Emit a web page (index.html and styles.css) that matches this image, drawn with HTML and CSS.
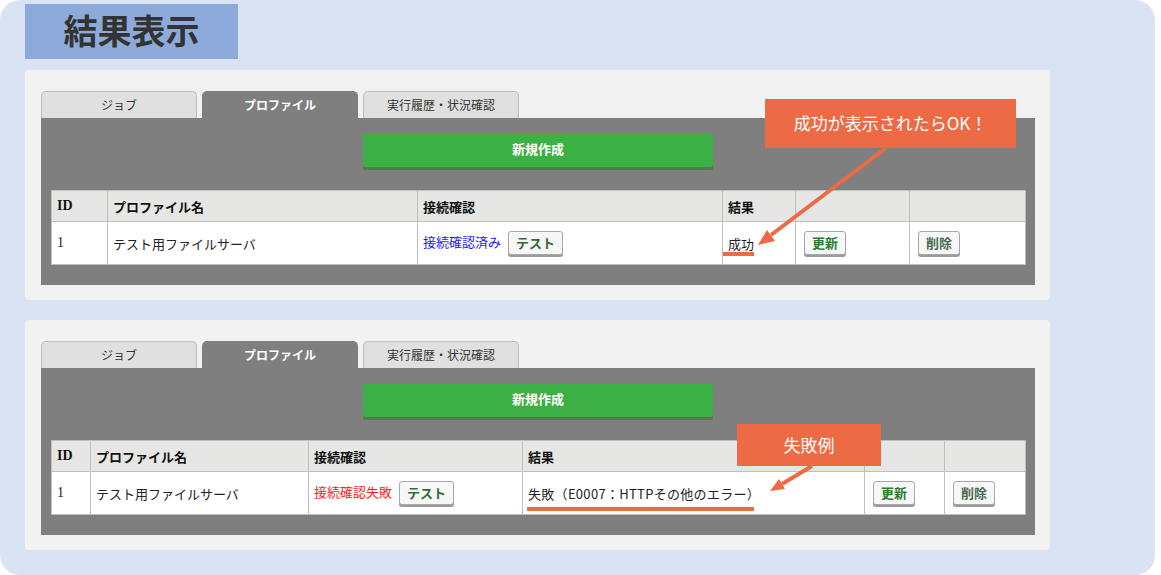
FILE: index.html
```html
<!DOCTYPE html>
<html lang="ja">
<head>
    <meta charset="UTF-8">
    <title>結果表示</title>
    <link rel="stylesheet" href="styles.css">
</head>
<body>

<div class="frame">
    <div class="title-box">結果表示</div>

    <!-- 成功例 -->
    <div class="panel">
        <div class="tabs">
            <div class="tab">ジョブ</div>
            <div class="tab active">プロファイル</div>
            <div class="tab">実行履歴・状況確認</div>
        </div>
        <div class="tab-body">
            <div class="btn-new">新規作成</div>
            <table class="list list-ok">
                <colgroup>
                    <col class="c-id"><col class="c-name"><col class="c-conn"><col class="c-res"><col class="c-upd"><col class="c-del">
                </colgroup>
                <tr>
                    <th class="id">ID</th>
                    <th>プロファイル名</th>
                    <th>接続確認</th>
                    <th>結果</th>
                    <th></th>
                    <th></th>
                </tr>
                <tr>
                    <td class="id">1</td>
                    <td>テスト用ファイルサーバ</td>
                    <td><span class="conn-ok">接続確認済み</span><span class="btn btn-test">テスト</span></td>
                    <td>成功</td>
                    <td><span class="btn btn-upd">更新</span></td>
                    <td><span class="btn btn-del">削除</span></td>
                </tr>
            </table>
        </div>
    </div>

    <!-- 失敗例 -->
    <div class="panel">
        <div class="tabs">
            <div class="tab">ジョブ</div>
            <div class="tab active">プロファイル</div>
            <div class="tab">実行履歴・状況確認</div>
        </div>
        <div class="tab-body">
            <div class="btn-new">新規作成</div>
            <table class="list list-ng">
                <colgroup>
                    <col class="c-id"><col class="c-name"><col class="c-conn"><col class="c-res"><col class="c-upd"><col class="c-del">
                </colgroup>
                <tr>
                    <th class="id">ID</th>
                    <th>プロファイル名</th>
                    <th>接続確認</th>
                    <th>結果</th>
                    <th></th>
                    <th></th>
                </tr>
                <tr>
                    <td class="id">1</td>
                    <td>テスト用ファイルサーバ</td>
                    <td><span class="conn-ng">接続確認失敗</span><span class="btn btn-test">テスト</span></td>
                    <td class="res-ng">失敗（E0007：HTTPその他のエラー）</td>
                    <td><span class="btn btn-upd">更新</span></td>
                    <td><span class="btn btn-del">削除</span></td>
                </tr>
            </table>
        </div>
    </div>

    <!-- annotations -->
    <svg class="notes" width="1155" height="575" viewBox="0 0 1155 575">
        <rect x="723" y="252" width="31" height="4" fill="#ec6a44"/>
        <line x1="886" y1="148" x2="771" y2="235" stroke="#ec6a44" stroke-width="4"/>
        <polygon points="758,245 775,241 767,230" fill="#ec6a44"/>

        <rect x="527" y="507" width="227" height="4" fill="#ec6a44"/>
        <line x1="812" y1="466" x2="782" y2="484" stroke="#ec6a44" stroke-width="4"/>
        <polygon points="770,491 785,489 779,479" fill="#ec6a44"/>
    </svg>
    <div class="callout callout-ok">成功が表示されたらOK！</div>
    <div class="callout callout-ng">失敗例</div>
</div>

</body>
</html>
```

FILE: styles.css
```css
body {
    margin: 0;
    background: #ffffff;
    font-family: "Noto Sans CJK JP", "Noto Sans", sans-serif;
    color: #222;
}
.frame {
    position: relative;
    width: 1155px;
    height: 575px;
    box-sizing: border-box;
    padding: 4px 0 0 25px;
    background: #dae3f3;
    border-radius: 20px;
}
.title-box {
    width: 213px;
    height: 55px;
    background: #8eaadb;
    color: #333;
    font-size: 34px;
    font-weight: bold;
    line-height: 52px;
    text-align: center;
}
.panel {
    width: 1025px;
    height: 230px;
    box-sizing: border-box;
    margin-top: 11px;
    padding: 21px 15px 15px 16px;
    background: #f2f2f2;
    border-radius: 4px;
}
.panel + .panel {
    margin-top: 20px;
}
.tabs {
    display: flex;
    gap: 5px;
    height: 27px;
}
.tab {
    width: 156px;
    box-sizing: border-box;
    background: #e0e0e0;
    border: 1px solid #bdbdbd;
    border-bottom: none;
    border-radius: 5px 5px 0 0;
    font-size: 12px;
    line-height: 26px;
    text-align: center;
    color: #333;
}
.tab.active {
    background: #7f7f7f;
    border-color: #7f7f7f;
    color: #fff;
    font-weight: bold;
}
.tab-body {
    height: 167px;
    box-sizing: border-box;
    padding: 15px 10px 0;
    background: #7f7f7f;
}
.btn-new {
    width: 350px;
    height: 34px;
    margin: 0 auto;
    background: #3cb045;
    border-radius: 2px;
    box-shadow: 0 3px 0 #56784f;
    color: #fff;
    font-size: 13px;
    font-weight: bold;
    line-height: 32px;
    text-align: center;
}
.list {
    width: 974px;
    margin-top: 23px;
    table-layout: fixed;
    border-collapse: collapse;
    background: #fff;
    font-size: 13px;
}
.list th,
.list td {
    border: 1px solid #bfbfbf;
    padding: 0 5px;
    text-align: left;
    white-space: nowrap;
    vertical-align: middle;
}
.list th {
    height: 30px;
    background: #e6e7e5;
    font-weight: bold;
    color: #111;
}
.list td {
    height: 42px;
    color: #222;
}
.list .id {
    font-family: "Liberation Serif", serif;
    font-size: 14px;
}
.list-ok .c-id { width: 56px; }
.list-ok .c-name { width: 310px; }
.list-ok .c-conn { width: 305px; }
.list-ok .c-res { width: 73px; }
.list-ok .c-upd { width: 114px; }
.list-ok .c-del { width: 116px; }
.list-ng .c-id { width: 39px; }
.list-ng .c-name { width: 218px; }
.list-ng .c-conn { width: 214px; }
.list-ng .c-res { width: 342px; }
.list-ng .c-upd { width: 80px; }
.list-ng .c-del { width: 81px; }
.conn-ok {
    color: #1a1aff;
}
.conn-ng {
    color: #ff1a1a;
}
.res-ng {
    letter-spacing: 0.3px;
}
.btn {
    display: inline-block;
    height: 24px;
    box-sizing: border-box;
    padding: 0 7px;
    margin-left: 3px;
    background: #f7f7f7;
    border: 1px solid #a8a8a8;
    border-radius: 3px;
    box-shadow: 0 2px 0 #9a9a9a;
    font-size: 13px;
    font-weight: bold;
    line-height: 22px;
    vertical-align: middle;
}
.btn-test {
    margin-left: 7px;
    color: #2f6a38;
}
.btn-upd {
    color: #2f7a32;
}
.btn-del {
    color: #4a6a52;
}
.notes {
    position: absolute;
    left: 0;
    top: 0;
    pointer-events: none;
}
.callout {
    position: absolute;
    background: #ec6a44;
    color: #fff;
    font-size: 17px;
    text-align: center;
}
.callout-ok {
    left: 765px;
    top: 99px;
    width: 251px;
    height: 49px;
    line-height: 48px;
}
.callout-ng {
    left: 737px;
    top: 424px;
    width: 144px;
    height: 42px;
    line-height: 41px;
}
```
